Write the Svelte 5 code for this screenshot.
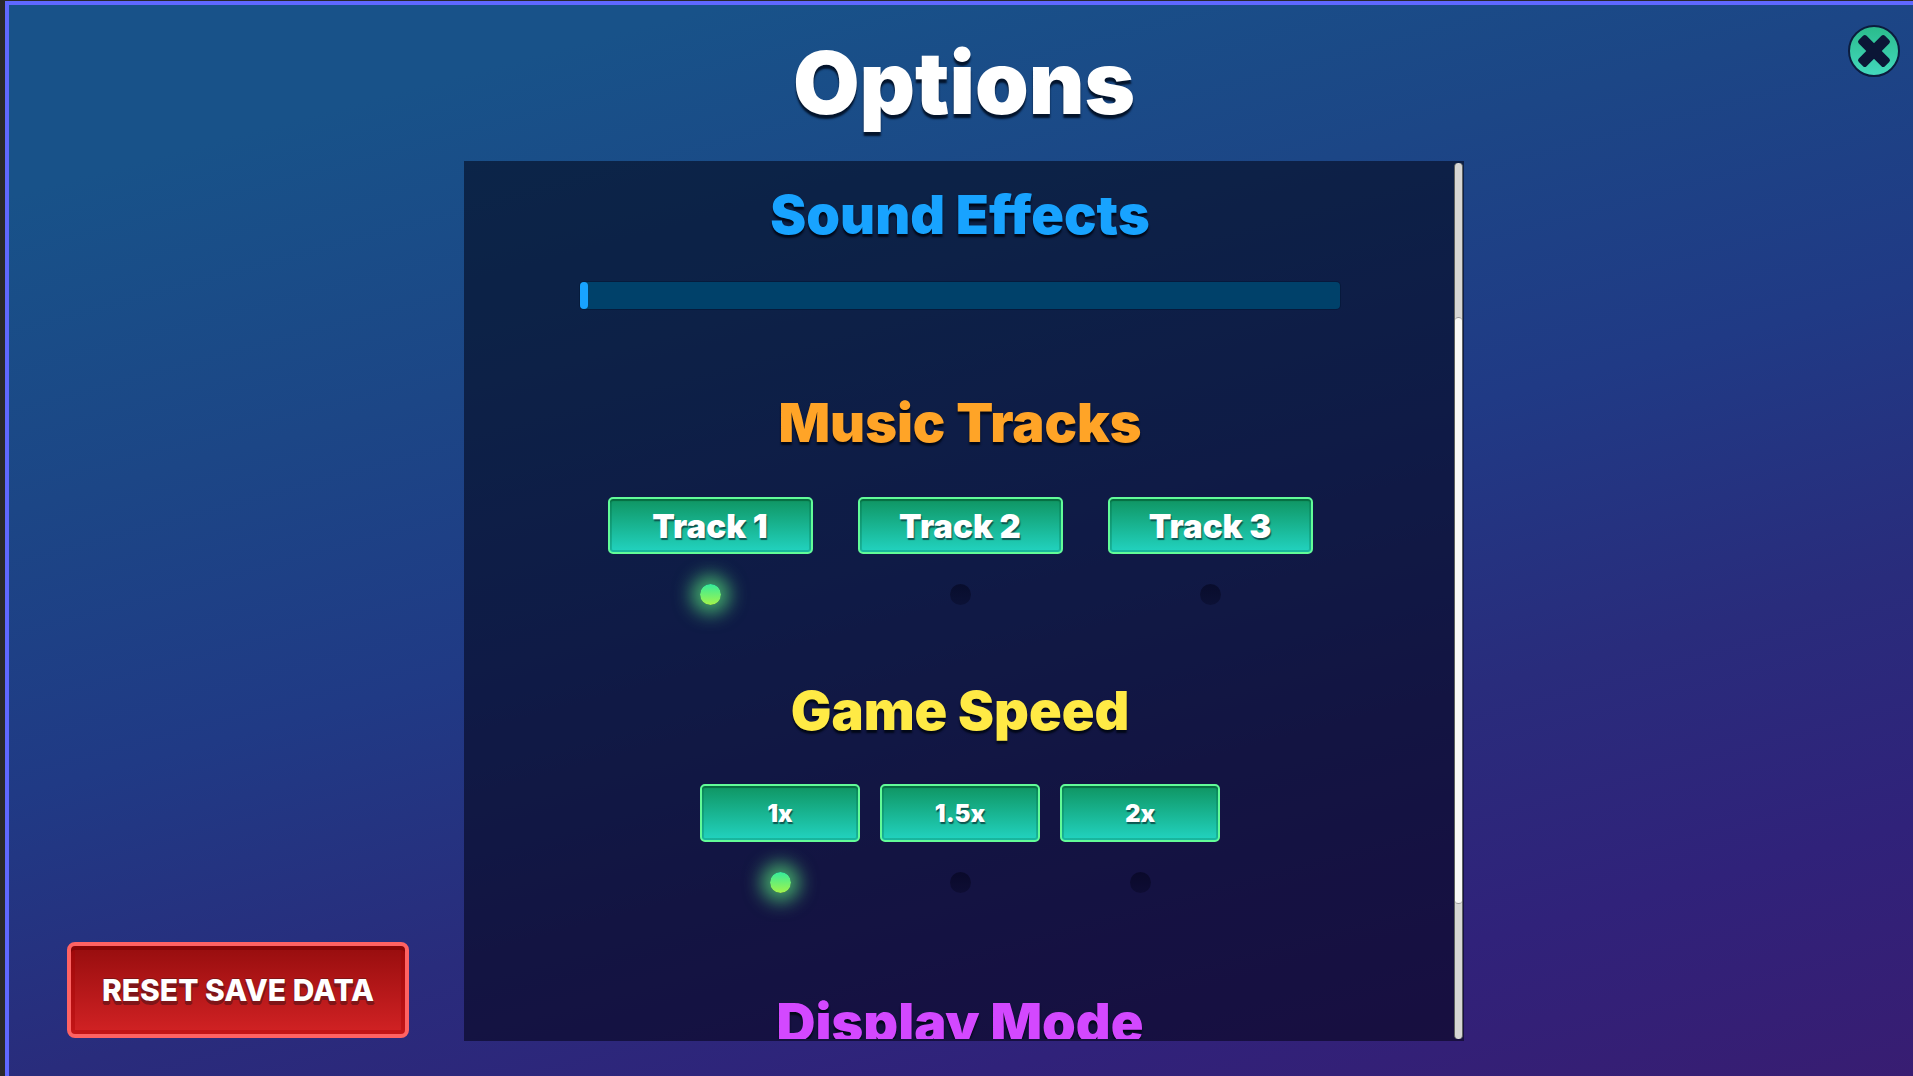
<script>
  const tracks = ["Track 1", "Track 2", "Track 3"];
  const speeds = ["1x", "1.5x", "2x"];

  let volume = 0;
  let currentTrack = 0;
  let currentSpeed = 0;
</script>

<div class="options-screen">
  <header>
    <h1>Options</h1>
    <button class="close" aria-label="Close">
      <svg viewBox="0 0 52 52" aria-hidden="true">
        <g fill="#0b1636" transform="rotate(45 26 26)">
          <rect x="7.5" y="20.5" width="37" height="11" rx="2.5" />
          <rect x="20.5" y="7.5" width="11" height="37" rx="2.5" />
        </g>
      </svg>
    </button>
  </header>

  <main>
    <div class="side">
      <button class="reset">RESET SAVE DATA</button>
    </div>

    <div class="panel">
      <div class="content">
        <section class="sound">
          <h2><label for="effects">Sound Effects</label></h2>
          <input id="effects" type="range" min="0" max="100" bind:value={volume} />
        </section>

        <section class="tracks">
          <h2>Music Tracks</h2>
          <div class="choices">
            {#each tracks as track, i}
              <div class="choice">
                <button on:click={() => (currentTrack = i)}>{track}</button>
                <span class="light" class:on={currentTrack === i}></span>
              </div>
            {/each}
          </div>
        </section>

        <section class="speeds">
          <h2>Game Speed</h2>
          <div class="choices">
            {#each speeds as speed, i}
              <div class="choice">
                <button on:click={() => (currentSpeed = i)}>{speed}</button>
                <span class="light" class:on={currentSpeed === i}></span>
              </div>
            {/each}
          </div>
        </section>

        <section class="display">
          <h2>Display Mode</h2>
        </section>
      </div>

      <div class="scroll-track">
        <div class="scroll-thumb"></div>
      </div>
    </div>
  </main>
</div>

<style>
  :global(body) {
    overflow: hidden;
    background: #29292b;
  }

  .options-screen {
    box-sizing: border-box;
    display: flex;
    flex-direction: column;
    height: calc(100vh - 1px);
    margin: 1px 0 0 5px;
    padding: 0 0 35px 6px;
    border: solid #5f68ff;
    border-width: 4px 0 0 4px;
    overflow: hidden;
    background: linear-gradient(165deg, #185289 12%, #1c4686 32%, #203a85 50%, #292c7c 68%, #30227a 84%, #381d72 100%);
    font-family: Inter, "Open Sans", sans-serif;
    font-weight: 900;
  }

  header {
    display: grid;
    grid-template-columns: 1fr auto 1fr;
    flex: none;
    height: 156px;
  }

  h1 {
    grid-column: 2;
    margin: 28px 0 0;
    color: #fff;
    font-size: 86px;
    font-weight: 900;
    line-height: 100px;
    text-shadow: 0 4px 2px #03142c;
  }

  button {
    box-sizing: border-box;
    padding: 0;
    color: #fff;
    font-family: inherit;
    font-weight: 900;
    cursor: pointer;
  }

  .close {
    justify-self: end;
    width: 52px;
    height: 52px;
    margin: 20px 13px 0 0;
    border: 2px solid #0b1c3e;
    border-radius: 50%;
    background: linear-gradient(#2bbb8c, #43d9bd);
  }

  .close svg {
    display: block;
    width: 52px;
    height: 52px;
    margin: -2px;
  }

  main {
    display: grid;
    grid-template-columns: 1fr minmax(0, 1000px) 1fr;
    grid-template-rows: minmax(0, 1fr);
    flex: 1;
    min-height: 0;
  }

  .side {
    display: flex;
    align-items: flex-end;
    padding: 0 52px 3px;
  }

  .reset {
    width: 342px;
    height: 96px;
    flex: none;
    border: 4px solid #ff6262;
    border-radius: 8px;
    background: linear-gradient(#970d0e, #d22224);
    box-shadow: inset 0 0 0 4px rgba(170, 0, 0, 0.35), inset 0 4px 0 rgba(60, 0, 0, 0.4);
    font-size: 30px;
    font-weight: 800;
    text-shadow: 0 4px 0 #7f1518, 1px 3px 0 #7f1518, -1px 3px 0 #7f1518, 0 -1px 0 #7f1518;
  }

  .panel {
    display: flex;
    box-sizing: border-box;
    padding: 2px 1px 2px 0;
    background: rgba(0, 0, 16, 0.53);
  }

  .content {
    flex: 1;
    padding: 22px 0 0 2px;
    overflow: hidden;
  }

  section {
    display: flex;
    flex-direction: column;
    align-items: center;
  }

  h2 {
    margin: 0;
    font-size: 54px;
    font-weight: 900;
    line-height: 60px;
    text-shadow: 0 3px 2px #020818;
  }

  .sound {
    gap: 37px;
    margin-bottom: 84px;
    color: #18a3ff;
  }

  .tracks {
    gap: 44px;
    margin-bottom: 76px;
    color: #ffa427;
  }

  .speeds {
    gap: 43px;
    margin-bottom: 100px;
    color: #ffea45;
  }

  .display {
    color: #d348ff;
  }

  input[type="range"] {
    appearance: none;
    width: 760px;
    max-width: 90%;
    height: 27px;
    margin: 0;
    border-radius: 4px;
    background: #00416a;
    box-shadow: 0 0 0 1px rgba(0, 20, 50, 0.5);
  }

  input[type="range"]::-webkit-slider-thumb {
    appearance: none;
    width: 8px;
    height: 27px;
    border-radius: 4px;
    background: #18a3ff;
  }

  .choices {
    display: flex;
    gap: 45px;
  }

  .speeds .choices {
    gap: 20px;
  }

  .choice {
    display: flex;
    flex-direction: column;
    align-items: center;
    gap: 30px;
  }

  .choice button {
    width: 205px;
    height: 57px;
    border: 2px solid #62fc98;
    border-radius: 5px;
    background: linear-gradient(#0f9562, #22d3c0);
    box-shadow: inset 0 0 0 2px rgba(0, 100, 60, 0.25), inset 0 2px 1px rgba(0, 60, 20, 0.4);
    font-size: 33px;
    text-shadow: 1px 2px 1px rgba(10, 60, 60, 0.8);
  }

  .speeds .choice button {
    width: 160px;
    height: 58px;
    font-size: 24px;
  }

  .light {
    width: 21px;
    height: 21px;
    border-radius: 50%;
    background: linear-gradient(rgba(0, 0, 20, 0.5), rgba(0, 0, 20, 0.3));
  }

  .light.on {
    background: linear-gradient(#35eb9b, #a2f44b);
    box-shadow: 0 0 18px 9px rgba(85, 225, 120, 0.7);
  }

  .scroll-track {
    flex: none;
    box-sizing: border-box;
    width: 9px;
    border: 1px solid #5d605f;
    border-width: 0 1px;
    border-radius: 4px;
    background: #d6d6d4;
  }

  .scroll-thumb {
    box-sizing: border-box;
    height: 67%;
    margin-top: 154px;
    border-top: 1px solid #9c9c9c;
    border-bottom: 1px solid #9c9c9c;
    border-radius: 4px;
    background: #f8f8f6;
  }
</style>
